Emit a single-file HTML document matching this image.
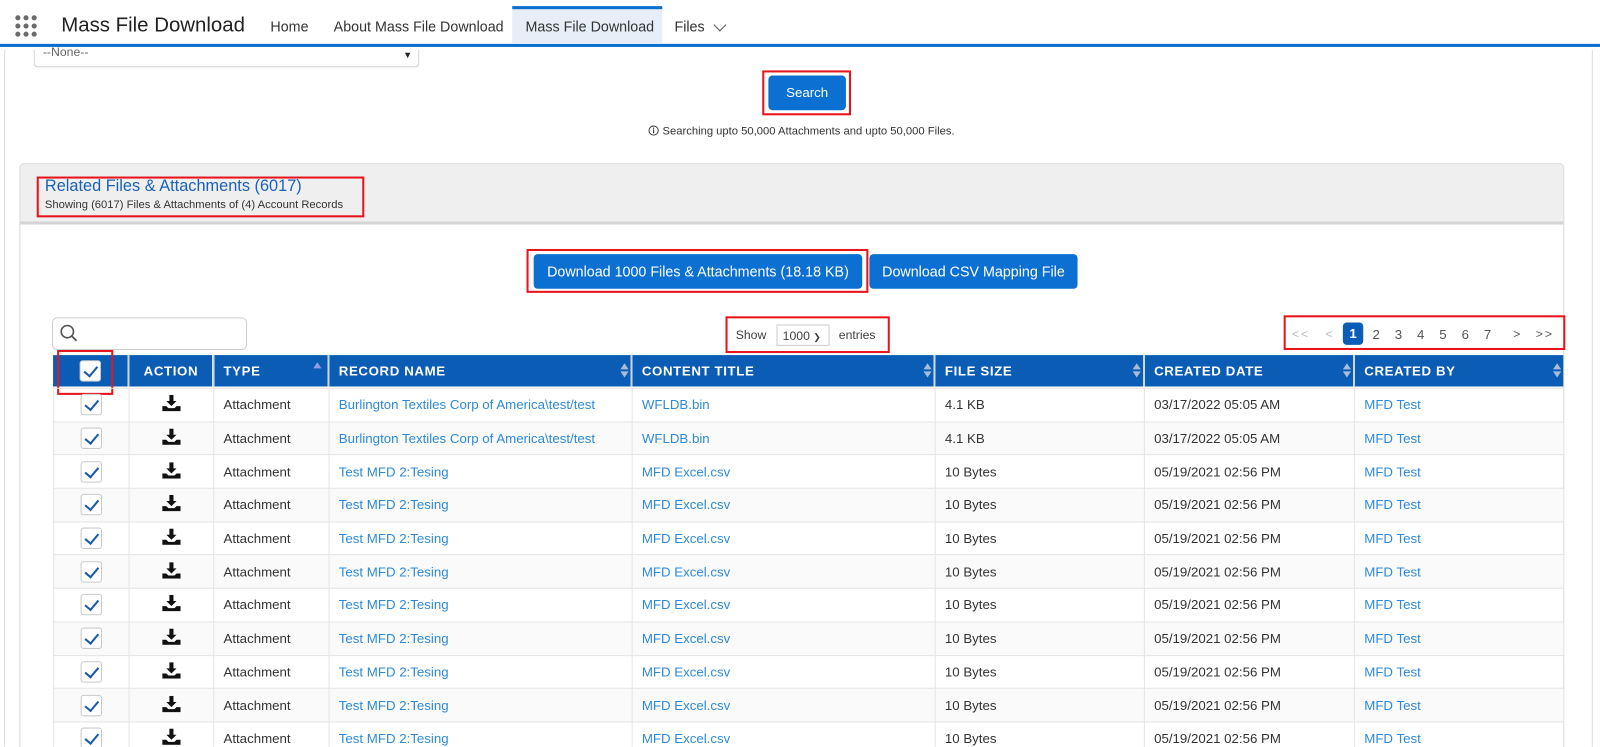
<!DOCTYPE html><html style="height:747px;overflow:hidden"><head><style>
*{box-sizing:border-box;margin:0;padding:0}
body{width:1600px;height:747px;overflow:hidden;background:#fff;font-family:"Liberation Sans",sans-serif;font-size:13px;color:#3e3e3c;position:relative}
#w{position:absolute;left:0;top:0;width:1568px;height:732px;overflow:hidden;transform:scale(1.0204);transform-origin:0 0}
.a{position:absolute}
.red{position:absolute;border:2px solid #e8141c}
.nav{left:0;top:0;width:1568px;height:46px;background:#fff;border-bottom:3px solid #0b6fd0}
.dot{position:absolute;width:5px;height:5px;border-radius:50%;background:#6b6b6b}
.tab{position:absolute;top:18px;font-size:14px;color:#333}
table{position:absolute;left:52px;top:348px;width:1480px;border-collapse:collapse;table-layout:fixed}
th{background:#0b5cb5;color:#fff;font-weight:bold;font-size:13px;letter-spacing:.6px;text-align:left;height:31px;padding-left:9px;border-left:2px solid #c9d6e6;position:relative}
td{height:32.7px;border:1px solid #e4e4e4;padding-left:9px;font-size:13px;color:#333}
tr:nth-child(even) td{background:#fafafa}
td.l{color:#2d8ad8}
.cb{display:inline-block;width:21px;height:21px;border:1px solid #c9c9c9;border-radius:3px;background:#fff;position:relative;vertical-align:middle}
.cb:after{content:"";position:absolute;left:6px;top:2px;width:6px;height:11px;border:solid #1a5aa8;border-width:0 2.5px 2.5px 0;transform:rotate(40deg)}
.srt{position:absolute;right:6px;top:8px;width:0;height:0}
.srt:before{content:"";position:absolute;left:-4px;top:0;border:4px solid transparent;border-bottom:6px solid #a8bcd8;border-top:0}
.srt:after{content:"";position:absolute;left:-4px;top:8px;border:4px solid transparent;border-top:6px solid #a8bcd8;border-bottom:0}
.btn{position:absolute;background:#0b70d2;color:#fff;border-radius:4px;font-size:14px;text-align:center}
</style></head><body><div id="w">
<div class="a nav">
<div class="dot" style="left:15px;top:15px"></div><div class="dot" style="left:23px;top:15px"></div><div class="dot" style="left:31px;top:15px"></div>
<div class="dot" style="left:15px;top:23px"></div><div class="dot" style="left:23px;top:23px"></div><div class="dot" style="left:31px;top:23px"></div>
<div class="dot" style="left:15px;top:31px"></div><div class="dot" style="left:23px;top:31px"></div><div class="dot" style="left:31px;top:31px"></div>
<div class="a" style="left:60px;top:14px;font-size:20px;color:#222">Mass File Download</div>
<div class="tab" style="left:265px">Home</div>
<div class="tab" style="left:327px">About Mass File Download</div>
<div class="a" style="left:502px;top:6px;width:147px;height:37px;background:#e7eef8;border-top:3px solid #0b6fd0"></div>
<div class="tab" style="left:515px">Mass File Download</div>
<div class="tab" style="left:661px">Files</div>
<div class="a" style="left:701px;top:20px;width:9px;height:9px;border:solid #555;border-width:0 1.5px 1.5px 0;transform:rotate(45deg)"></div>
</div>
<div class="a" style="left:4px;top:49px;width:1px;height:700px;background:#ddd"></div>
<div class="a" style="left:1560px;top:49px;width:1px;height:700px;background:#ddd"></div>
<div class="a" style="left:33px;top:49px;width:378px;height:17px;border:1px solid #ccc;border-top:0;border-radius:0 0 4px 4px;font-size:12px;color:#666;padding-left:8px;line-height:4px">--None--<span style="position:absolute;right:6px;top:3px;font-size:9px;color:#222">▼</span></div>
<div class="red" style="left:747px;top:69px;width:87px;height:44px"></div>
<div class="btn" style="left:753px;top:74px;width:76px;height:34px;line-height:34px;font-size:13px">Search</div>
<div class="a" style="left:635px;top:120px;font-size:11px;color:#333">🛈 Searching upto 50,000 Attachments and upto 50,000 Files.</div>
<div class="a" style="left:19px;top:160px;width:1514px;height:600px;border:1px solid #d8d8d8;border-radius:4px 4px 0 0"></div>
<div class="a" style="left:20px;top:161px;width:1512px;height:59px;background:#efefef;border-bottom:3px solid #d4d4d4"></div>
<div class="red" style="left:36px;top:173px;width:321px;height:40px"></div>
<div class="a" style="left:44px;top:174px;font-size:16px;color:#1a62b8">Related Files &amp; Attachments (6017)</div>
<div class="a" style="left:44px;top:195px;font-size:11px;color:#333">Showing (6017) Files &amp; Attachments of (4) Account Records</div>
<div class="red" style="left:516px;top:244px;width:335px;height:43px"></div>
<div class="btn" style="left:523px;top:249px;width:322px;height:34px;line-height:34px">Download 1000 Files &amp; Attachments (18.18 KB)</div>
<div class="btn" style="left:852px;top:249px;width:204px;height:34px;line-height:34px">Download CSV Mapping File</div>
<div class="a" style="left:51px;top:311px;width:191px;height:32px;border:1px solid #ccc;border-radius:5px"></div>
<svg class="a" style="left:58px;top:317px" width="20" height="20"><circle cx="8" cy="8" r="6" fill="none" stroke="#555" stroke-width="1.6"/><line x1="12.5" y1="12.5" x2="17" y2="17" stroke="#555" stroke-width="1.8"/></svg>
<div class="red" style="left:711px;top:310px;width:161px;height:36px"></div>
<div class="a" style="left:721px;top:321px;font-size:12px">Show</div>
<div class="a" style="left:761px;top:318px;width:52px;height:21px;border:1px solid #ccc;font-size:12px;padding:3px 5px">1000 <span style="font-size:9px">❯</span></div>
<div class="a" style="left:822px;top:321px;font-size:12px">entries</div>
<div class="red" style="left:1258px;top:309px;width:276px;height:34px"></div>
<div class="a" style="left:1266px;top:320px;font-size:12px;color:#bbb;letter-spacing:2px">&lt;&lt;</div>
<div class="a" style="left:1299px;top:320px;font-size:12px;color:#bbb">&lt;</div>
<div class="a" style="left:1316px;top:316px;width:20px;height:22px;background:#0b5cb5;border-radius:4px;color:#fff;font-weight:bold;text-align:center;line-height:22px">1</div>
<div class="a" style="left:1345px;top:320px;font-size:13px;color:#555;word-spacing:11px">2 3 4 5 6 7</div>
<div class="a" style="left:1483px;top:320px;font-size:12px;color:#555">&gt;</div>
<div class="a" style="left:1505px;top:320px;font-size:12px;color:#555;letter-spacing:2px">&gt;&gt;</div>
<table>
<colgroup><col style="width:74px"><col style="width:83px"><col style="width:113px"><col style="width:297px"><col style="width:297px"><col style="width:205px"><col style="width:206px"><col style="width:205px"></colgroup>
<tr><th style="text-align:center;padding:0;border-left:0"><span class="cb"></span></th><th style="text-align:center;padding:0">ACTION</th><th>TYPE<span style="position:absolute;right:6px;top:7px;border:4px solid transparent;border-bottom:6px solid #9a9ae0;border-top:0"></span></th><th>RECORD NAME<span class="srt"></span></th><th>CONTENT TITLE<span class="srt"></span></th><th>FILE SIZE<span class="srt"></span></th><th>CREATED DATE<span class="srt"></span></th><th>CREATED BY<span class="srt"></span></th></tr>
</table>
<div class="red" style="left:56px;top:343px;width:55px;height:44px"></div>
<table style="top:380px" id="t"></table>
</div>
<script>
var h='<colgroup><col style="width:74px"><col style="width:83px"><col style="width:113px"><col style="width:297px"><col style="width:297px"><col style="width:205px"><col style="width:206px"><col style="width:205px"></colgroup>';
var ic='<svg width="18" height="16" viewBox="0 0 18 16"><path d="M7 0h4v6h3l-5 5-5-5h3z" fill="#111"/><path d="M0 11h4l2 2h6l2-2h4v5H0z" fill="#111"/></svg>';
for(var i=0;i<11;i++){var b=i<2;h+='<tr><td style="text-align:center;padding:0"><span class="cb"></span></td><td style="text-align:center;padding:0">'+ic+'</td><td>Attachment</td><td class="l">'+(b?'Burlington Textiles Corp of America\\test/test':'Test MFD 2:Tesing')+'</td><td class="l">'+(b?'WFLDB.bin':'MFD Excel.csv')+'</td><td>'+(b?'4.1 KB':'10 Bytes')+'</td><td>'+(b?'03/17/2022 05:05 AM':'05/19/2021 02:56 PM')+'</td><td class="l">MFD Test</td></tr>';}
document.getElementById('t').innerHTML=h;
</script>
</body></html>
